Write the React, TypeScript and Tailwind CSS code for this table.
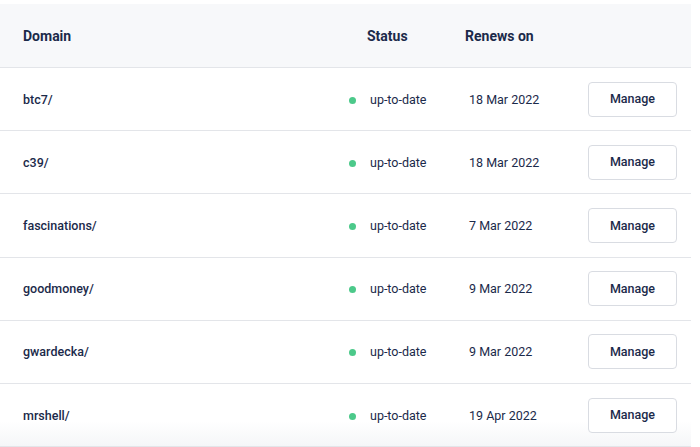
import React from 'react';

const domains = [
  { name: 'btc7/', renews: '18 Mar 2022' },
  { name: 'c39/', renews: '18 Mar 2022' },
  { name: 'fascinations/', renews: '7 Mar 2022' },
  { name: 'goodmoney/', renews: '9 Mar 2022' },
  { name: 'gwardecka/', renews: '9 Mar 2022' },
  { name: 'mrshell/', renews: '19 Apr 2022' },
];

const App = () => {
  return (
    <div className="w-[700px] h-[447px] bg-white pt-[4px] overflow-hidden" style={{ fontFamily: 'Roboto, "Noto Sans", sans-serif' }}>
      <div className="w-[691px] text-[#1b2a4a]">
        <div className="flex items-center h-[64px] pt-[2px] bg-[#f7f8fa] border-b border-[#e3e5e9] text-[14px] font-bold">
          <div className="w-[345px] pl-[23px]">Domain</div>
          <div className="w-[117px] pl-[22px]">Status</div>
          <div className="flex-1 pl-[3px]">Renews on</div>
        </div>
        {domains.map((d, i) => (
          <div
            key={d.name}
            className={`flex items-center h-[63.2px] border-b border-[#e3e5e9] text-[12.5px] ${i === domains.length - 1 ? 'bg-gradient-to-b from-white from-60% to-[#f5f6f8]' : ''}`}
          >
            <div className="w-[345px] pl-[23px] font-medium pt-[2px]">{d.name}</div>
            <div className="w-[117px] pl-[4px] flex items-center pt-[2px]">
              <span className="w-[7px] h-[7px] rounded-full bg-[#4cc98a]" />
              <span className="ml-[14px]">up-to-date</span>
            </div>
            <div className="flex-1 pl-[7px] pt-[2px]">{d.renews}</div>
            <div className="pr-[14px]">
              <button className="w-[89px] h-[35px] pt-px rounded-[4px] border border-[#d9dce2] bg-white text-[12.5px] font-medium text-[#1b2a4a]">
                Manage
              </button>
            </div>
          </div>
        ))}
      </div>
    </div>
  );
};

export default App;
